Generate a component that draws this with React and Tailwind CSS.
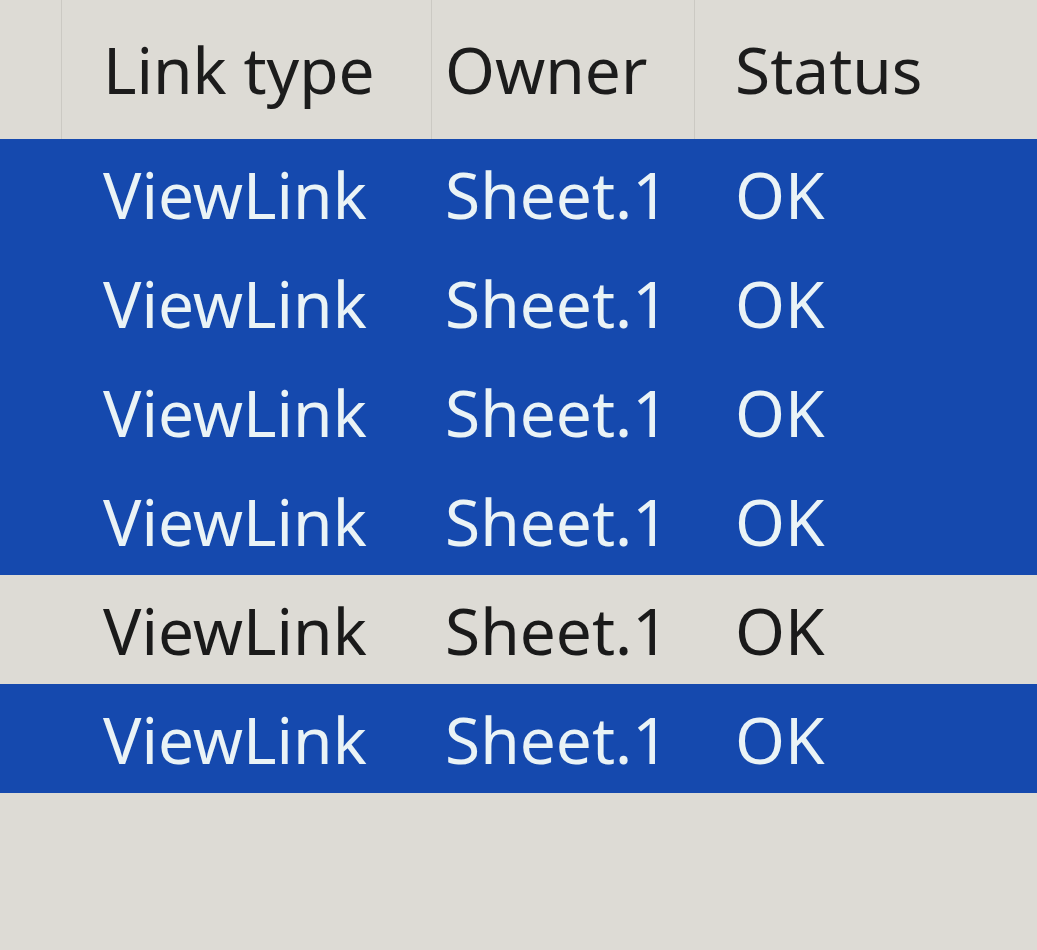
import React from 'react';

const rows = [
    { type: 'ViewLink', owner: 'Sheet.1', status: 'OK', selected: true },
    { type: 'ViewLink', owner: 'Sheet.1', status: 'OK', selected: true },
    { type: 'ViewLink', owner: 'Sheet.1', status: 'OK', selected: true },
    { type: 'ViewLink', owner: 'Sheet.1', status: 'OK', selected: true },
    { type: 'ViewLink', owner: 'Sheet.1', status: 'OK', selected: false },
    { type: 'ViewLink', owner: 'Sheet.1', status: 'OK', selected: true },
];

const cols = 'grid grid-cols-[62px_370px_263px_1fr]';

const App = () => {
    return (
        <div
            className="w-[1037px] h-[950px] overflow-hidden bg-[#dddbd5] text-[64px] leading-none"
            style={{ fontFamily: '"Noto Sans", "Open Sans", sans-serif' }}
        >
            {/* header */}
            <div className={`${cols} h-[139px] text-[#1c1c1c]`}>
                <div className="border-r border-[#cbc9c3]" />
                <div className="border-r border-[#cbc9c3] pl-[41px] pt-[38px]">Link type</div>
                <div className="border-r border-[#cbc9c3] pl-[13px] pt-[38px]">Owner</div>
                <div className="pl-[40px] pt-[38px]">Status</div>
            </div>

            {rows.map((row, i) => (
                <div
                    key={i}
                    className={`${cols} h-[109px] items-center ${row.selected ? 'bg-[#1549ae] text-[#eaf3f6]' : 'text-[#1a1a1a]'}`}
                >
                    <div />
                    <div className="pl-[41px] pt-[2px]">{row.type}</div>
                    <div className="pl-[13px] pt-[2px]">{row.owner}</div>
                    <div className="pl-[40px] pt-[2px]">{row.status}</div>
                </div>
            ))}
        </div>
    );
};

export default App;
